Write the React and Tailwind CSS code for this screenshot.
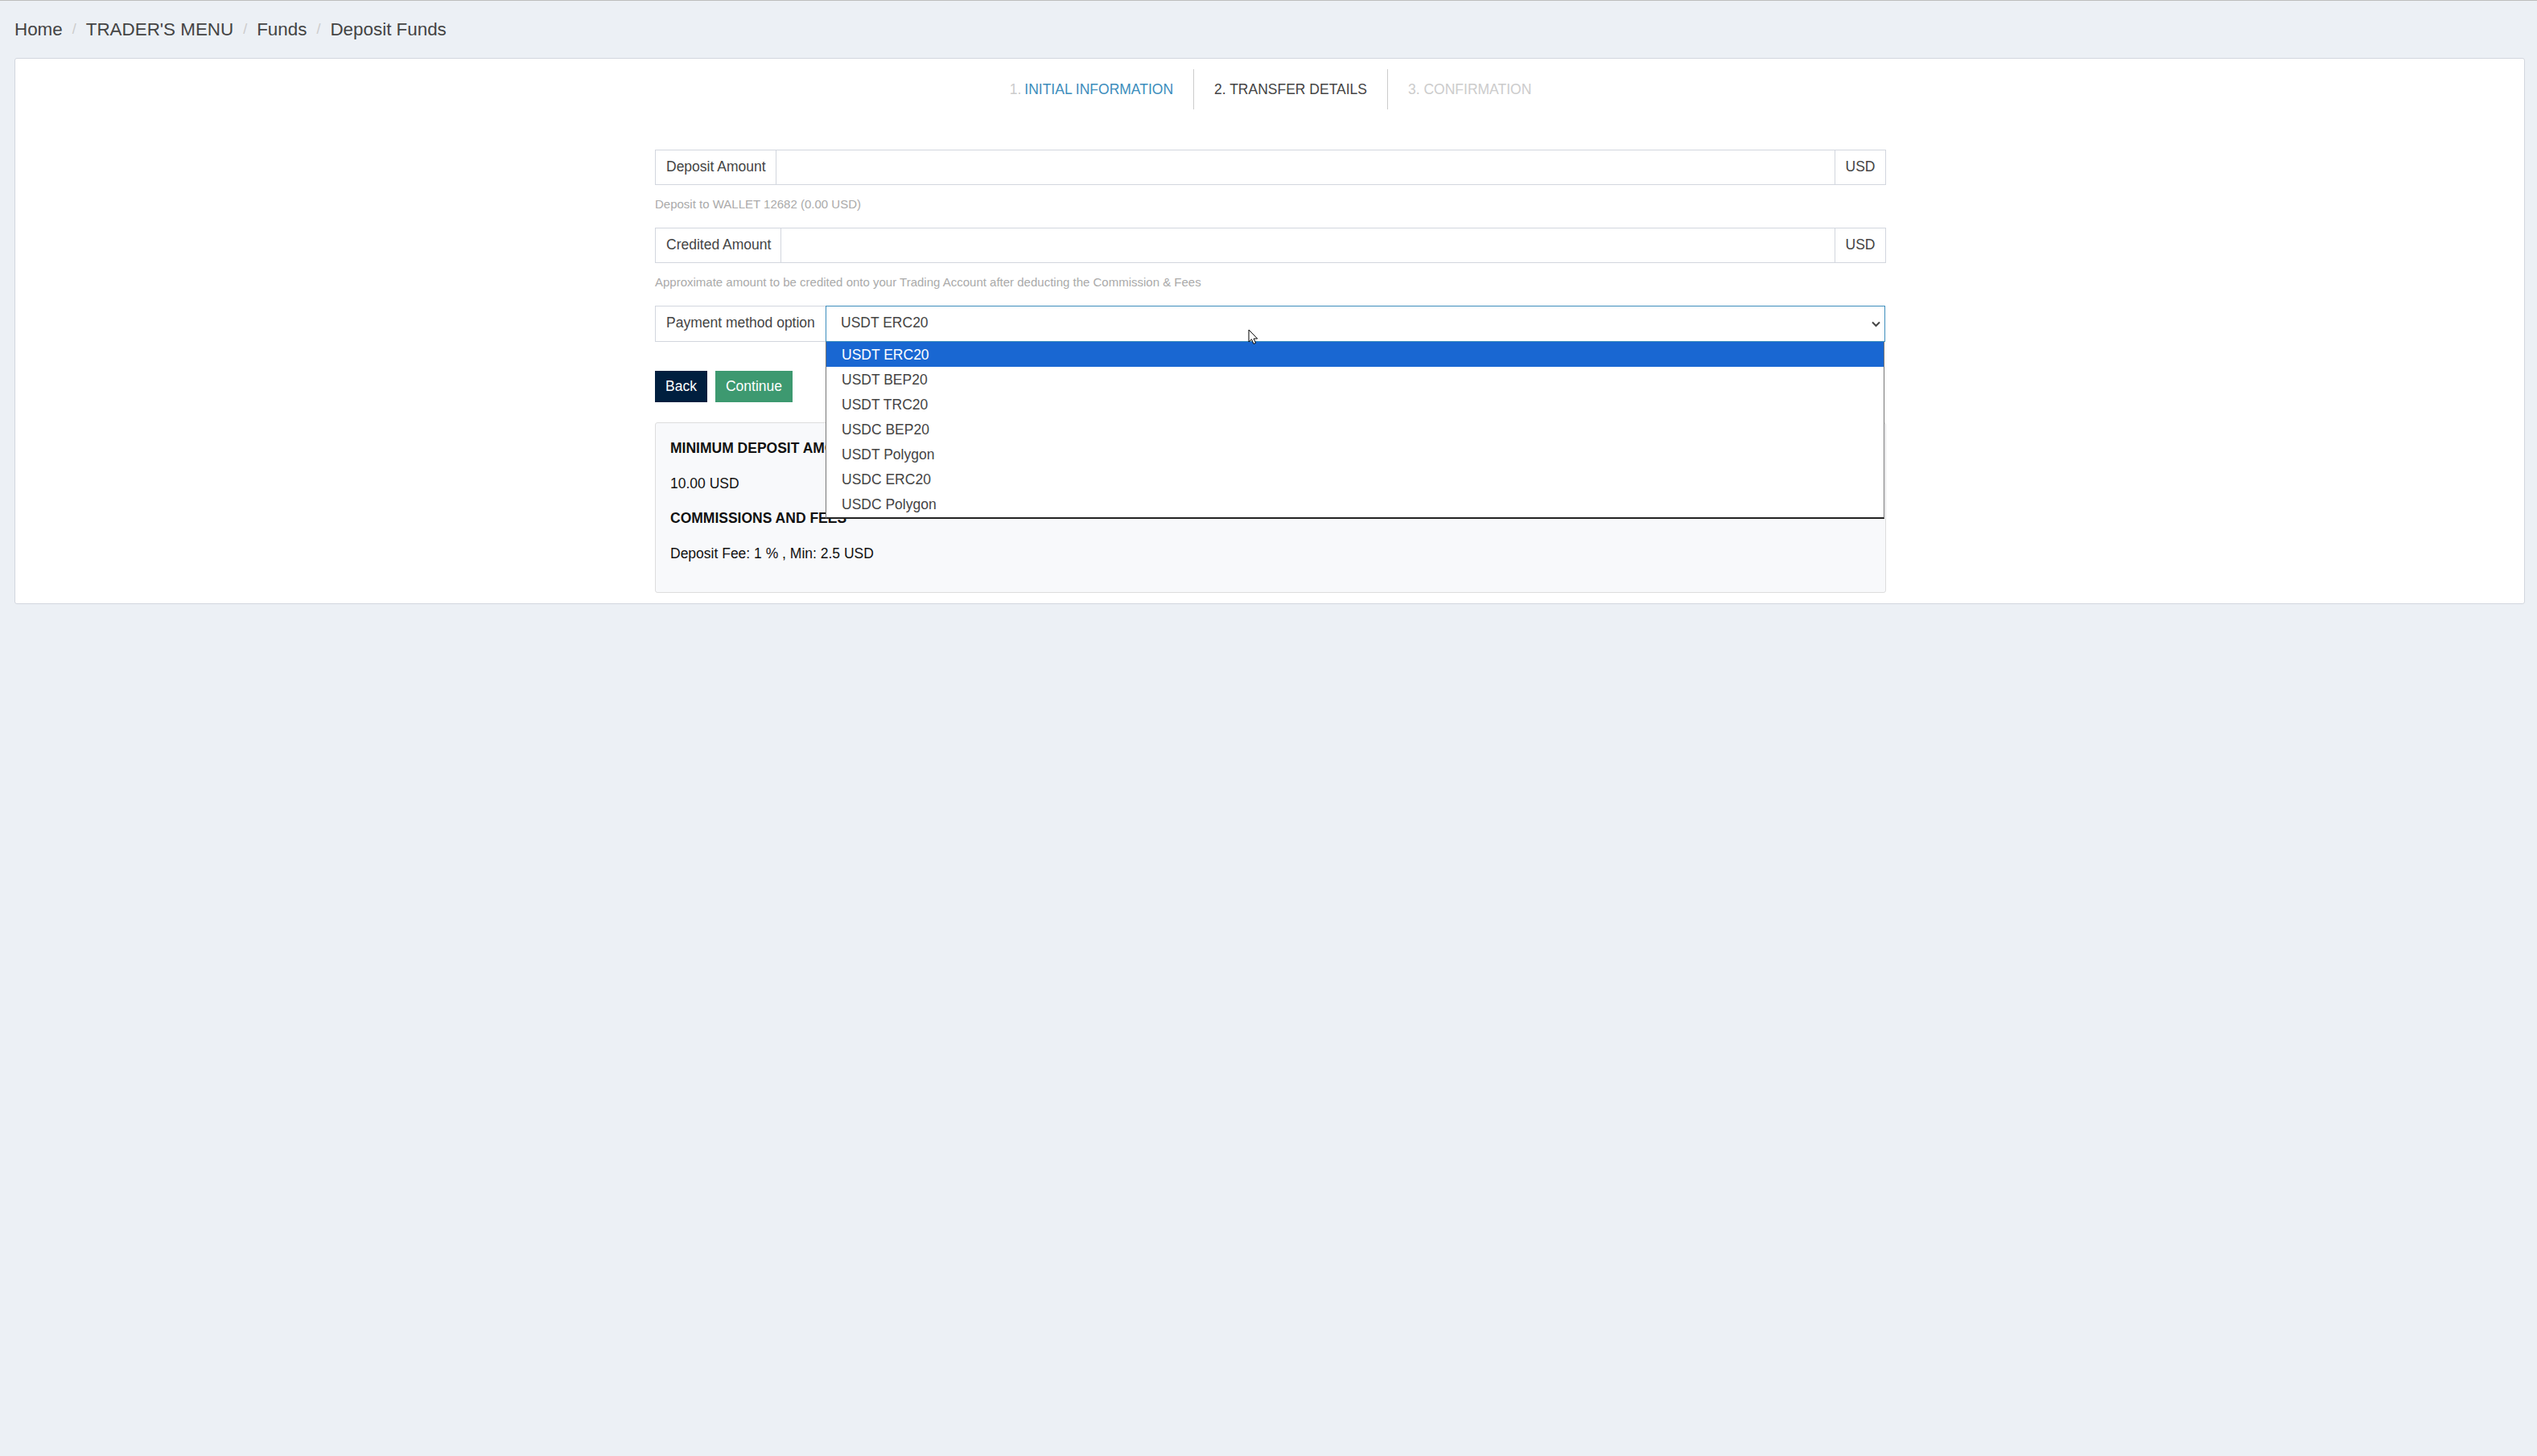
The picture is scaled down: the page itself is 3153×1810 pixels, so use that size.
import React from 'react';

const crumbs = ["Home", "TRADER'S MENU", "Funds", "Deposit Funds"];
const options = ["USDT ERC20", "USDT BEP20", "USDT TRC20", "USDC BEP20", "USDT Polygon", "USDC ERC20", "USDC Polygon"];

const AmountRow = ({ label }) => (
    <div className="flex h-[44px] border border-[#d2d6de]">
        <span className="flex items-center pl-[13px] pr-[12px] pb-[2px] border-r border-[#d2d6de] whitespace-nowrap">{label}</span>
        <input className="flex-1 min-w-0 outline-none bg-white" />
        <span className="flex items-center justify-center w-[63px] pb-[2px] border-l border-[#d2d6de]">USD</span>
    </div>
);

const App = () => {
    return (
        <div className="min-h-screen bg-[#ecf0f5] border-t border-[#bdbdbd] text-[#444] text-[17.5px] font-['Liberation_Sans',Arial,sans-serif]">
            {/* Breadcrumb */}
            <div className="flex items-center h-[71px] pl-[18px] text-[22.4px]">
                {crumbs.map((c, i) => (
                    <React.Fragment key={c}>
                        {i > 0 && <span className="px-[12px] text-[#ccc] text-[18px]">/</span>}
                        <span>{c}</span>
                    </React.Fragment>
                ))}
            </div>

            {/* Card */}
            <div className="ml-[18px] mr-[15px] bg-white border border-[#d2d6de] rounded-[3px] pt-[13px] pb-[13px]">
                {/* Steps */}
                <div className="flex justify-center h-[50px] pl-[2px]">
                    <div className="flex items-center pr-[25px] text-[#3c8dbc] border-r border-[#ccc]">
                        <span className="text-[#ccc] mr-[4px]">1.</span>INITIAL INFORMATION
                    </div>
                    <div className="flex items-center px-[25px] border-r border-[#ccc]">2. TRANSFER DETAILS</div>
                    <div className="flex items-center pl-[25px] text-[#ccc]">3. CONFIRMATION</div>
                </div>

                {/* Form */}
                <div className="w-[1530px] ml-[795px] mt-[50px]">
                    <AmountRow label="Deposit Amount" />
                    <p className="h-[53px] pt-[12px] leading-[24px] text-[15px] text-[#aaa]">Deposit to WALLET 12682 (0.00 USD)</p>
                    <AmountRow label="Credited Amount" />
                    <p className="h-[53px] pt-[12px] leading-[24px] text-[15px] text-[#aaa]">
                        Approximate amount to be credited onto your Trading Account after deducting the Commission &amp; Fees
                    </p>

                    {/* Payment method with open dropdown */}
                    <div className="relative flex h-[45px]">
                        <span className="flex items-center pl-[13px] pb-[2px] w-[212px] border border-r-0 border-[#d2d6de] whitespace-nowrap">Payment method option</span>
                        <div className="flex flex-1 items-center justify-between mr-[1px] pl-[18px] pr-[5px] border border-[#3c8dbc]">
                            <span className="pb-[2px]">USDT ERC20</span>
                            <svg width="11" height="8" viewBox="0 0 11 8" fill="none" stroke="#444" strokeWidth="2">
                                <path d="M1 1.5l4.5 4.5L10 1.5" />
                            </svg>
                        </div>
                        <ul className="absolute z-10 top-full left-[212px] right-[2px] bg-white border-x border-b-2 border-x-[#767676] border-b-[#222] pb-[1px]">
                            {options.map((o, i) => (
                                <li key={o} className={`h-[31px] leading-[33px] pl-[19px] ${i === 0 ? 'bg-[#1967d2] text-white' : ''}`}>{o}</li>
                            ))}
                        </ul>
                        {/* Mouse pointer */}
                        <svg className="absolute z-20 left-[737px] top-[29px]" width="13" height="20" viewBox="0 0 13 20">
                            <path d="M1 1v15l3.5-3.2L7 18.5l2.6-1.2-2.5-5.3h4.6z" fill="#fff" stroke="#000" strokeWidth="1" />
                        </svg>
                    </div>

                    <div className="flex gap-[10px] mt-[36px]">
                        <button className="h-[39px] w-[65px] bg-[#001f3f] text-white">Back</button>
                        <button className="h-[39px] w-[96px] bg-[#3d9970] text-white">Continue</button>
                    </div>

                    {/* Info panel */}
                    <div className="mt-[25px] h-[212px] bg-[#f8f9fb] border border-[#ddd] rounded-[3px] pl-[18px] pt-[19px] text-[#111] leading-[25px]">
                        <p className="mb-[18.6px] font-bold">MINIMUM DEPOSIT AMOUNT</p>
                        <p className="mb-[18.6px]">10.00 USD</p>
                        <p className="mb-[18.6px] font-bold">COMMISSIONS AND FEES</p>
                        <p>Deposit Fee: 1 % , Min: 2.5 USD</p>
                    </div>
                </div>
            </div>
        </div>
    );
};

export default App;
